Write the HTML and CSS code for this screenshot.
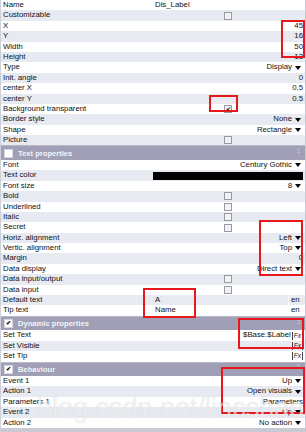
FILE: index.html
```html
<!DOCTYPE html>
<html lang="en">
<head>
   <meta charset="UTF-8">
   <title>Properties</title>
   <link rel="stylesheet" href="styles.css">
</head>
<body>
<div class="panel">
   <div class="section">
      <div class="row"><span class="lbl">Name</span><span class="val text">Dis_Label</span></div>
      <div class="row"><span class="lbl">Customizable</span><span class="val center"><i class="cb"></i></span></div>
      <div class="row"><span class="lbl">X</span><span class="val num">45</span></div>
      <div class="row"><span class="lbl">Y</span><span class="val num">16</span></div>
      <div class="row"><span class="lbl">Width</span><span class="val num">50</span></div>
      <div class="row"><span class="lbl">Height</span><span class="val num">13</span></div>
      <div class="row"><span class="lbl">Type</span><span class="val drop">Display<i class="arrow"></i></span></div>
      <div class="row"><span class="lbl">Init. angle</span><span class="val num">0</span></div>
      <div class="row"><span class="lbl">center X</span><span class="val num">0.5</span></div>
      <div class="row"><span class="lbl">center Y</span><span class="val num">0.5</span></div>
      <div class="row"><span class="lbl">Background transparent</span><span class="val center"><i class="cb on">&#10004;</i></span></div>
      <div class="row"><span class="lbl">Border style</span><span class="val drop">None<i class="arrow"></i></span></div>
      <div class="row"><span class="lbl">Shape</span><span class="val drop">Rectangle<i class="arrow"></i></span></div>
      <div class="row"><span class="lbl">Picture</span><span class="val center"><i class="cb"></i></span></div>
   </div>

   <div class="head"><i class="hcb"></i><span class="htitle">Text properties</span><span class="chev">&#8963;<br>&#8963;</span></div>
   <div class="section">
      <div class="row"><span class="lbl">Font</span><span class="val drop">Century Gothic<i class="arrow"></i></span></div>
      <div class="row"><span class="lbl">Text color</span><span class="val"><i class="swatch"></i></span></div>
      <div class="row"><span class="lbl">Font size</span><span class="val drop">8<i class="arrow"></i></span></div>
      <div class="row"><span class="lbl">Bold</span><span class="val center"><i class="cb"></i></span></div>
      <div class="row"><span class="lbl">Underlined</span><span class="val center"><i class="cb"></i></span></div>
      <div class="row"><span class="lbl">Italic</span><span class="val center"><i class="cb"></i></span></div>
      <div class="row"><span class="lbl">Secret</span><span class="val center"><i class="cb"></i></span></div>
      <div class="row"><span class="lbl">Horiz. alignment</span><span class="val drop">Left<i class="arrow"></i></span></div>
      <div class="row"><span class="lbl">Vertic. alignment</span><span class="val drop">Top<i class="arrow"></i></span></div>
      <div class="row"><span class="lbl">Margin</span><span class="val num">0</span></div>
      <div class="row"><span class="lbl">Data display</span><span class="val drop">Direct text<i class="arrow"></i></span></div>
      <div class="row"><span class="lbl">Data input/output</span><span class="val center"><i class="cb"></i></span></div>
      <div class="row"><span class="lbl">Data input</span><span class="val center"><i class="cb"></i></span></div>
      <div class="row"><span class="lbl">Default text</span><span class="val lang"><span class="txt">A</span><span class="tag">en</span></span></div>
      <div class="row"><span class="lbl">Tip text</span><span class="val lang"><span class="txt">Name</span><span class="tag">en</span></span></div>
   </div>

   <div class="head"><i class="hcb on">&#10004;</i><span class="htitle">Dynamic properties</span><span class="chev">&#8963;<br>&#8963;</span></div>
   <div class="section">
      <div class="row"><span class="lbl">Set Text</span><span class="val fx">$Base.$Label<b class="fxb">Fx</b></span></div>
      <div class="row"><span class="lbl">Set Visible</span><span class="val fx"><b class="fxb">Fx</b></span></div>
      <div class="row"><span class="lbl">Set Tip</span><span class="val fx"><b class="fxb">Fx</b></span></div>
   </div>

   <div class="head"><i class="hcb on">&#10004;</i><span class="htitle">Behaviour</span><span class="chev">&#8963;<br>&#8963;</span></div>
   <div class="section">
      <div class="row"><span class="lbl">Event 1</span><span class="val drop">Up<i class="arrow"></i></span></div>
      <div class="row"><span class="lbl">Action 1</span><span class="val drop">Open visuals<i class="arrow"></i></span></div>
      <div class="row"><span class="lbl">Parameters 1</span><span class="val num">Parameters</span></div>
      <div class="row"><span class="lbl">Event 2</span><span class="val drop">Up<i class="arrow"></i></span></div>
      <div class="row"><span class="lbl">Action 2</span><span class="val drop">No action<i class="arrow"></i></span></div>
   </div>

   <!-- annotations drawn on top of the screenshot -->
   <div class="mark m1"></div>
   <div class="mark m2"></div>
   <div class="mark m3"></div>
   <div class="mark m4"></div>
   <div class="mark m5"></div>
   <div class="mark m6"></div>
   <div class="watermark">blog.csdn.net/lincshao</div>
</div>
</body>
</html>
```

FILE: styles.css
```css
body {
	margin: 0;
	background: #c9c9d3;
	font-family: 'Liberation Sans', Arial, sans-serif;
	font-size: 7.8px;
	color: #111;
}
.panel {
	position: relative;
	width: 304px;
	height: 432px;
	border-left: 1px solid #d0d0d8;
	background: #c9c9d3;
	overflow: hidden;
}
.row {
	display: grid;
	grid-template-columns: 152px 1fr;
	height: 10.4px;
	line-height: 10.4px;
	background: #ffffff;
}
.section .row:nth-child(even) {
	background: #e8eaf2;
}
.lbl {
	padding-left: 2px;
	white-space: nowrap;
}
.val {
	display: flex;
	align-items: center;
	white-space: nowrap;
	padding-right: 2px;
}
.text {
	padding-left: 2px;
}
.num {
	justify-content: flex-end;
}
.center {
	justify-content: center;
}
.drop {
	justify-content: flex-end;
}
.arrow {
	width: 0;
	height: 0;
	margin: 0 2px 0 3px;
	border-left: 3px solid transparent;
	border-right: 3px solid transparent;
	border-top: 4px solid #000;
}
.cb {
	width: 6px;
	height: 6px;
	border: 1px solid #9a9aa2;
	background: #f2f2f4;
	font-style: normal;
	font-size: 6px;
	line-height: 6px;
	text-align: center;
	color: #000;
}
.swatch {
	display: block;
	width: 100%;
	height: 8px;
	background: #000;
	margin-right: -2px;
}
.lang .txt {
	flex: 1;
	padding-left: 2px;
}
.tag {
	width: 12px;
	padding-left: 2px;
	border-left: 1px solid #fff;
}
.fx {
	justify-content: flex-end;
}
.fxb {
	font-weight: normal;
	font-style: italic;
	font-size: 6.5px;
	border-left: 1px solid #444;
	border-right: 1px solid #444;
	padding: 0 1px;
	margin-left: 1px;
	line-height: 8px;
}
.head {
	display: flex;
	align-items: center;
	height: 14.5px;
	background: #a09fb5;
	color: #f4f4f8;
	font-weight: bold;
	font-size: 7.6px;
	border-top: 1px solid #b8b8c8;
	box-sizing: border-box;
}
.hcb {
	width: 7px;
	height: 7px;
	margin: 0 5px 0 3px;
	background: #fff;
	border: 1px solid #d8d8e0;
	font-style: normal;
	font-size: 6px;
	line-height: 7px;
	text-align: center;
	color: #000;
}
.htitle {
	flex: 1;
}
.chev {
	width: 14px;
	font-size: 6px;
	line-height: 3px;
	color: #dcdcea;
	text-align: center;
	font-weight: normal;
}
.mark {
	position: absolute;
	border: 2px solid #e8171b;
	box-sizing: border-box;
}
.m1 { left: 280px; top: 20px; width: 24px; height: 38px; }
.m2 { left: 208px; top: 95px; width: 29px; height: 17px; }
.m3 { left: 258px; top: 220px; width: 44px; height: 56px; }
.m4 { left: 142px; top: 288px; width: 53px; height: 30px; }
.m5 { left: 237px; top: 318px; width: 66px; height: 31px; }
.m6 { left: 220px; top: 367px; width: 84px; height: 47px; }
.watermark {
	position: absolute;
	left: 36px;
	top: 393px;
	font-family: 'Liberation Sans', sans-serif;
	font-size: 27px;
	color: rgba(255, 255, 255, 0.6);
	text-shadow: 0 0 1px rgba(150, 150, 160, 0.35);
	white-space: nowrap;
	pointer-events: none;
}
```
